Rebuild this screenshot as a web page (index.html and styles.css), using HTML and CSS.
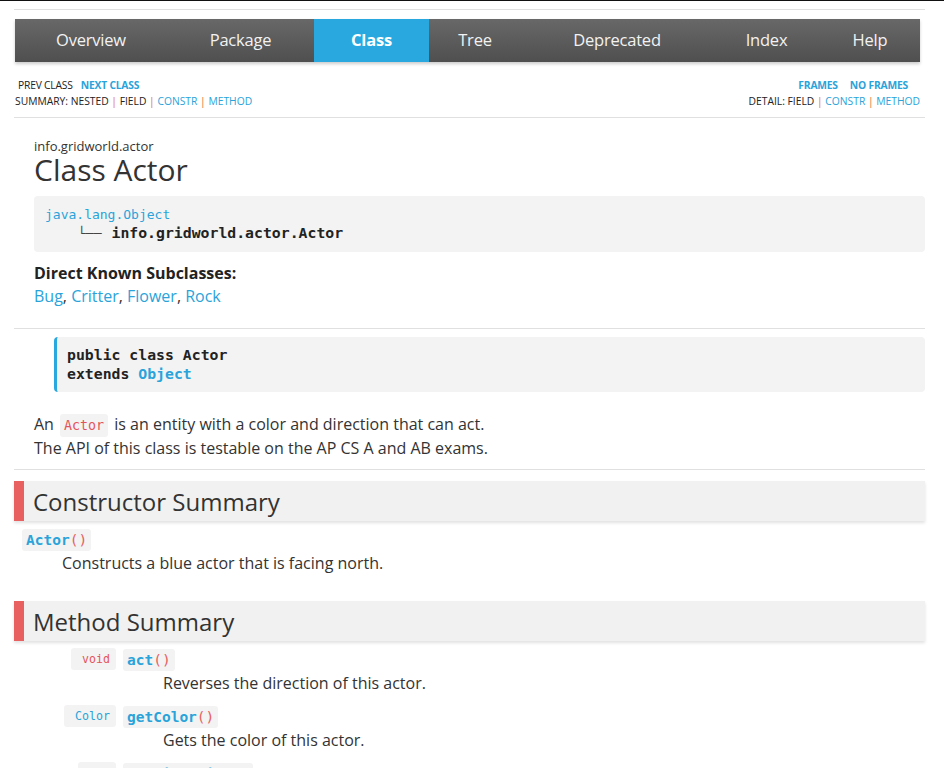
FILE: index.html
```html
<!DOCTYPE html>
<html>
<head>
<meta charset="utf-8">
<title>Actor</title>
<link rel="stylesheet" href="styles.css">
</head>
<body>
<div class="page">
  <div class="rule top-rule"></div>
  <nav class="topnav">
    <a class="tab t1">Overview</a>
    <a class="tab t2">Package</a>
    <a class="tab t3 active">Class</a>
    <a class="tab t4">Tree</a>
    <a class="tab t5">Deprecated</a>
    <a class="tab t6">Index</a>
    <a class="tab t7">Help</a>
  </nav>
  <div class="subnav">
    <div class="subcol">
      <div class="subrow first"><span>PREV CLASS</span><a class="strong">NEXT CLASS</a></div>
      <div class="subrow">SUMMARY:&nbsp;NESTED <i>|</i> FIELD <i>|</i> <a>CONSTR</a> <i>|</i> <a>METHOD</a></div>
    </div>
    <div class="subcol right">
      <div class="subrow first"><a class="strong">FRAMES</a><a class="strong">NO FRAMES</a></div>
      <div class="subrow">DETAIL:&nbsp;FIELD <i>|</i> <a>CONSTR</a> <i>|</i> <a>METHOD</a></div>
    </div>
  </div>
  <div class="rule"></div>

  <header class="classhead">
    <div class="pkg">info.gridworld.actor</div>
    <h1>Class Actor</h1>
    <div class="inherit">
      <div><a class="mono-link">java.lang.Object</a></div>
      <div class="inh2"><span class="tree">└──</span><b>info.gridworld.actor.Actor</b></div>
    </div>
    <div class="subs">
      <div class="subs-title">Direct Known Subclasses:</div>
      <div><a>Bug</a>, <a>Critter</a>, <a>Flower</a>, <a>Rock</a></div>
    </div>
  </header>
  <div class="rule"></div>

  <div class="sig">
    <div>public class Actor</div>
    <div>extends <a>Object</a></div>
  </div>
  <div class="desc">
    <div>An <code class="inline">Actor</code> is an entity with a color and direction that can act.</div>
    <div>The API of this class is testable on the AP CS A and AB exams.</div>
  </div>
  <div class="rule"></div>

  <section class="summary">
    <h2>Constructor Summary</h2>
    <div class="ctor">
      <code class="pill name">Actor<span class="paren">()</span></code>
      <div class="mdesc">Constructs a blue actor that is facing north.</div>
    </div>
  </section>

  <section class="summary">
    <h2>Method Summary</h2>
    <div class="methods">
      <div class="mrow">
        <div class="type"><code class="pill t-void">void</code></div>
        <div class="mcell">
          <code class="pill name">act<span class="paren">()</span></code>
          <div class="mdesc">Reverses the direction of this actor.</div>
        </div>
      </div>
      <div class="mrow">
        <div class="type"><code class="pill t-cls">Color</code></div>
        <div class="mcell">
          <code class="pill name">getColor<span class="paren">()</span></code>
          <div class="mdesc">Gets the color of this actor.</div>
        </div>
      </div>
      <div class="mrow">
        <div class="type"><code class="pill t-void">int</code></div>
        <div class="mcell">
          <code class="pill name">getDirection<span class="paren">()</span></code>
          <div class="mdesc">Gets the current direction of this actor.</div>
        </div>
      </div>
    </div>
  </section>
</div>
</body>
</html>
```

FILE: styles.css
```css
html, body {
  margin: 0;
  padding: 0;
  background: #fff;
}
body {
  border-top: 1px solid #111;
  font-family: "Open Sans", "Noto Sans", sans-serif;
  color: #333;
  font-size: 16px;
}
a {
  color: #2aa3da;
  text-decoration: none;
}
.page {
  width: 911px;
  padding-left: 14px;
}
.rule {
  height: 1px;
  background: #e0e0e0;
}
.top-rule {
  margin-top: 8px;
}
.topnav {
  display: flex;
  margin: 9px 5px 0 1px;
  height: 43px;
  background: linear-gradient(#686868, #4f4f4f);
  box-shadow: 0 2px 3px rgba(0,0,0,0.2);
}
.tab {
  display: flex;
  align-items: center;
  justify-content: center;
  padding-bottom: 3px;
  color: #f2f2f2;
  font-size: 16.5px;
  letter-spacing: -0.2px;
}
.tab.active {
  background: #29a8df;
  font-weight: 700;
  color: #fff;
}
.t1 { width: 152px; }
.t2 { width: 147px; }
.t3 { width: 115px; }
.t4 { width: 92px; }
.t5 { width: 192px; }
.t6 { width: 107px; }
.t7 { width: 100px; }

.subnav {
  display: flex;
  justify-content: space-between;
  padding: 15px 5px 8px 1px;
  font-size: 10.3px;
  text-transform: uppercase;
  color: #222;
}
.subrow {
  line-height: 16px;
}
.subrow i {
  font-style: normal;
  color: #e0703a;
}
.subrow.first {
  display: flex;
  gap: 8px;
  padding-left: 3px;
  letter-spacing: -0.2px;
}
.subcol.right .subrow {
  text-align: right;
}
.subcol.right .subrow.first {
  justify-content: flex-end;
  padding-right: 12px;
  gap: 12px;
}
.strong {
  font-weight: 700;
}

.classhead {
  padding: 19px 0 20px 20px;
}
.pkg {
  font-size: 13px;
  line-height: 18px;
}
h1 {
  margin: 0;
  font-weight: 400;
  font-size: 30px;
  line-height: 30px;
  color: #333;
}
.inherit {
  margin-top: 11px;
  background: #f3f3f3;
  border-radius: 4px;
  padding: 9px 11px 9px;
  font-family: "DejaVu Sans Mono", monospace;
  line-height: 18px;
}
.mono-link {
  font-size: 13px;
}
.inh2 {
  padding-left: 33px;
  font-size: 14.8px;
  color: #222;
}
.inh2 .tree {
  font-weight: 400;
  color: #444;
  font-size: 13px;
  margin-right: 10px;
}
.subs {
  margin-top: 10px;
  line-height: 23px;
}
.subs-title {
  font-weight: 700;
  color: #222;
}

.sig {
  margin: 8px 0 0 40px;
  background: #f3f3f3;
  border-left: 3px solid #29a8df;
  border-radius: 4px;
  padding: 8px 10px 9px;
  font-family: "DejaVu Sans Mono", monospace;
  font-weight: 700;
  font-size: 14.8px;
  line-height: 19px;
  color: #222;
}
.sig a {
  font-weight: 700;
}
.desc {
  padding: 20px 0 9px 20px;
  line-height: 24px;
}
code.inline {
  font-family: "DejaVu Sans Mono", monospace;
  font-size: 13.3px;
  line-height: 1;
  color: #e5535a;
  background: #f3f3f3;
  border-radius: 3px;
  padding: 4px 4px;
  margin: 0 2px;
}

.summary {
  padding-top: 11px;
}
h2 {
  margin: 0;
  height: 40px;
  display: flex;
  align-items: center;
  background: #f1f1f1;
  border-left: 10px solid #e96060;
  padding-left: 9px;
  font-weight: 400;
  font-size: 24px;
  color: #333;
  box-shadow: 0 2px 3px rgba(0,0,0,0.12);
}
.pill {
  display: block;
  width: fit-content;
  font-family: "DejaVu Sans Mono", monospace;
  background: #f3f3f3;
  border-radius: 3px;
  padding: 0 4px;
  line-height: 22px;
}
.name {
  font-weight: 700;
  font-size: 14.5px;
  color: #2aa3da;
}
.paren {
  color: #e96060;
  font-weight: 400;
}
.ctor {
  padding: 8px 0 15px 8px;
}
.mdesc {
  margin-left: 40px;
  line-height: 24px;
}
.methods {
  padding-top: 7px;
}
.mrow {
  display: flex;
  gap: 7px;
  height: 57px;
}
.type {
  width: 102px;
  display: flex;
  justify-content: flex-end;
  align-items: flex-start;
}
.t-void, .t-cls {
  font-size: 11.6px;
  padding: 0 6px 0 11px;
}
.t-void { color: #e5535a; }
.t-cls { color: #2aa3da; }
.mcell .pill {
  margin-top: 1px;
}
```
